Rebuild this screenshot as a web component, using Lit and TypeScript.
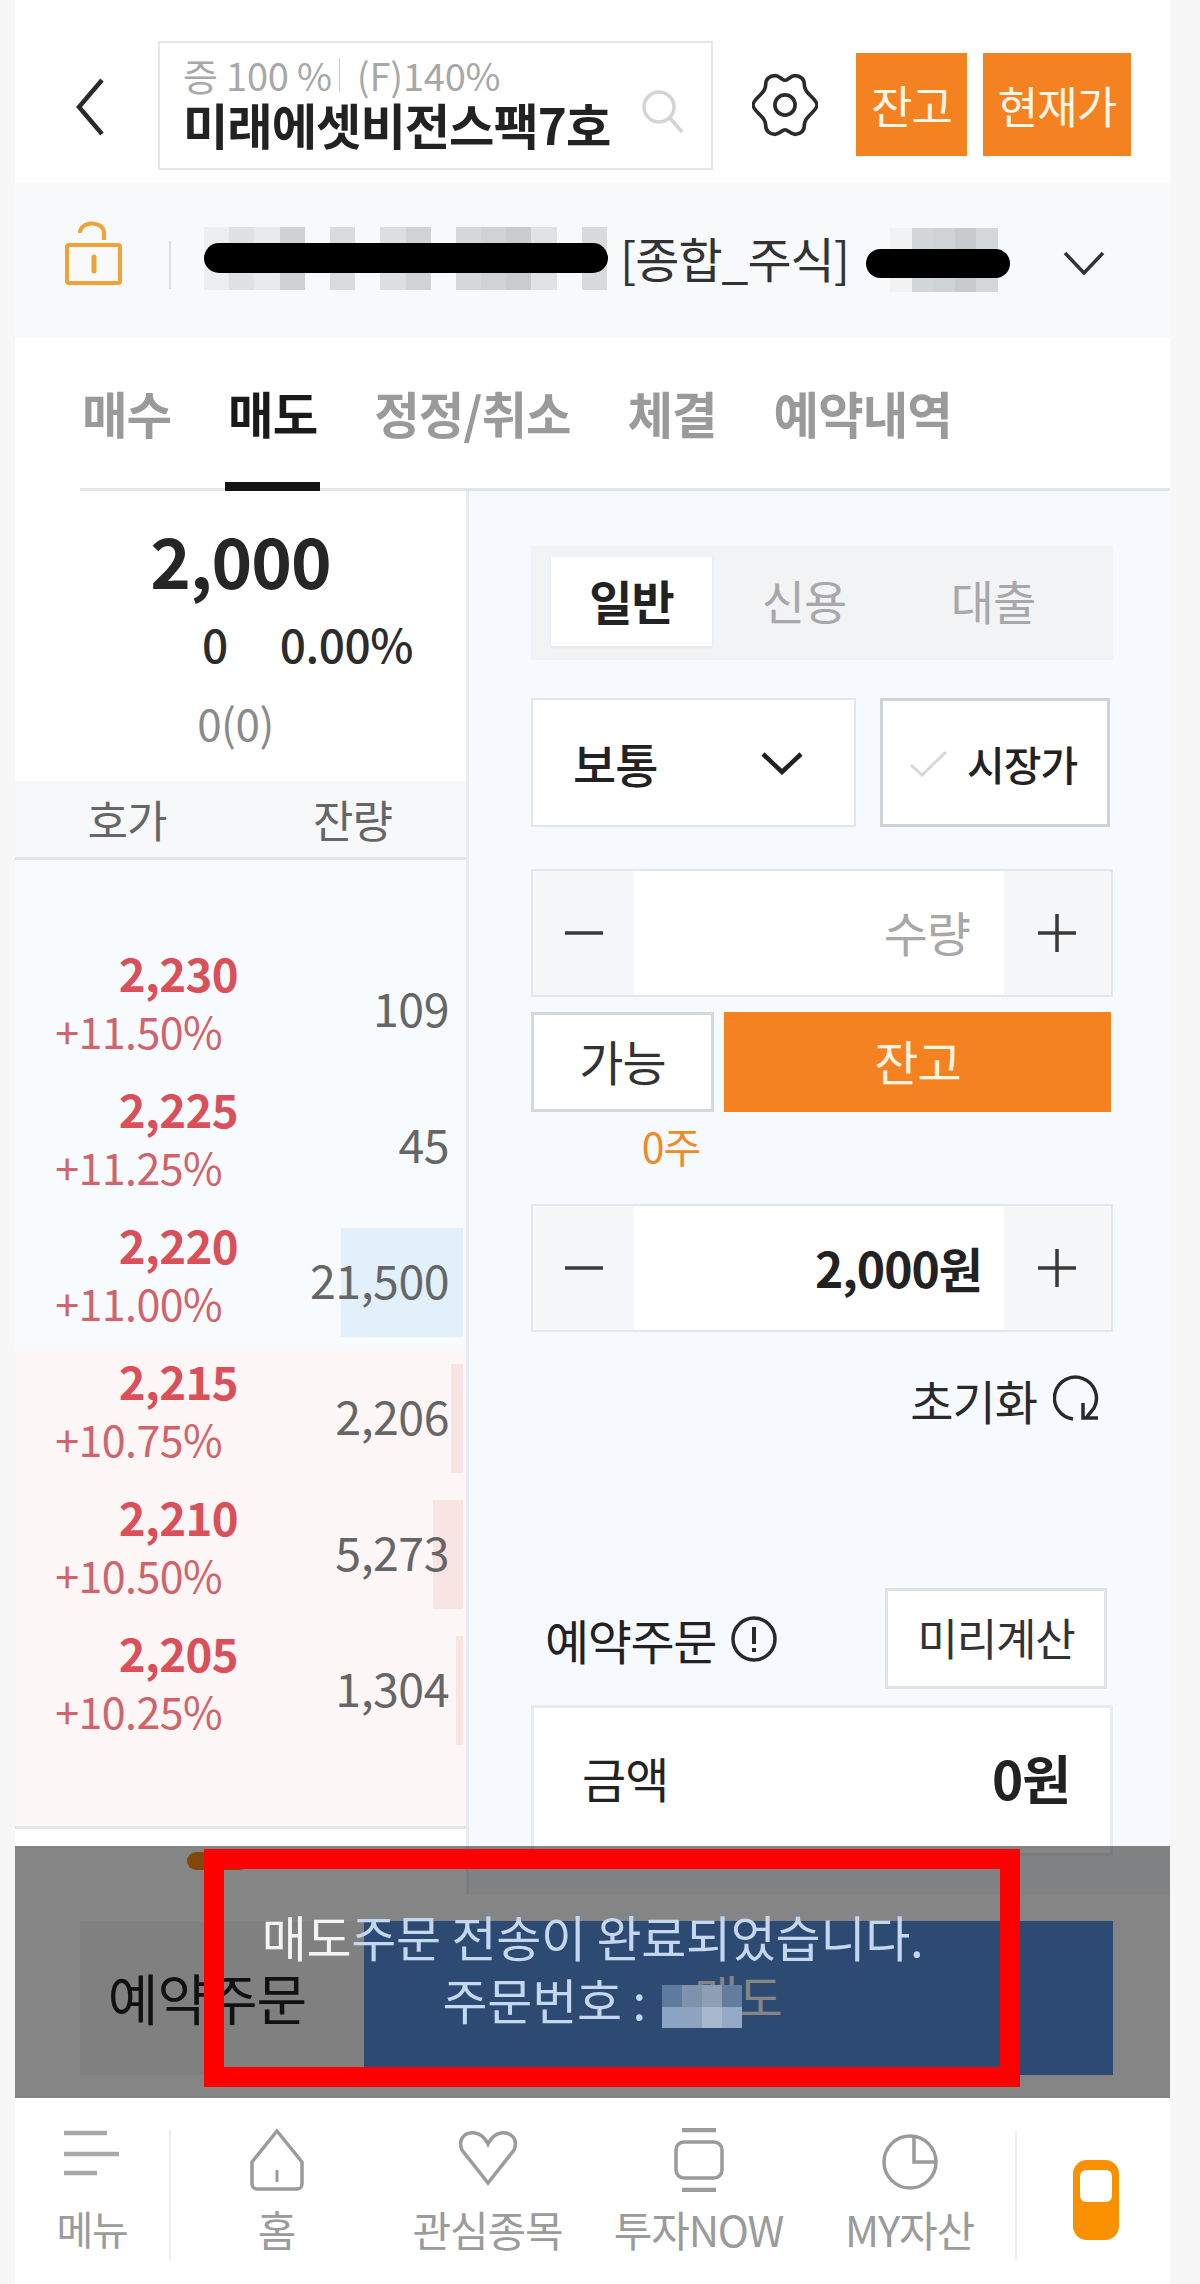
import { LitElement, html, css, svg } from "lit";
import { customElement } from "lit/decorators.js";

const rows = [
  { p: "2,230", c: "+11.50%", q: "109", bar: 0 },
  { p: "2,225", c: "+11.25%", q: "45", bar: 0 },
  { p: "2,220", c: "+11.00%", q: "21,500", bar: 122 },
  { p: "2,215", c: "+10.75%", q: "2,206", bar: 12, red: true },
  { p: "2,210", c: "+10.50%", q: "5,273", bar: 30, red: true },
  { p: "2,205", c: "+10.25%", q: "1,304", bar: 7, red: true },
];
const mosaicA = ["#eceef0","#dfe2e4","#e8eaec","#cfd2d4","#f7f9fb","#d9dcde","#f7f9fb","#dcdfe1","#cfd3d5","#f7f9fb","#d5d8da","#d0d3d5","#c9cccf","#e0e3e5","#f7f9fb","#d8dbdd"];
const mosaicB = ["#f0f2f4","#d3d6d8","#d0d3d5","#c8cbce","#d5d8da"];
const mosaicC = ["#5d7a9f","#7e92ab","#8f9fb3","#657d9d","#8ba3c4","#8ea3bf","#a7b8cd","#94a9c5"];

@customElement("app-root")
export class AppRoot extends LitElement {
  static styles = css`
    :host { display: block; width: 1200px; height: 2284px; overflow: hidden; background: #f7f7f7;
      font-family: "Noto Sans CJK KR", "Noto Sans", sans-serif; color: #222; }
    * { box-sizing: border-box; }
    .phone { width: 1155px; margin-left: 15px; height: 2284px; background: #fff; display: flex; flex-direction: column; }

    .header { height: 183px; padding: 41px 0 0 60px; display: flex; align-items: flex-start; }
    .back { width: 32px; height: 60px; margin: 36px 51px 0 0; }
    .search { width: 555px; height: 129px; border: 2px solid #e4e6e8; padding: 9px 0 0 23px; position: relative; flex: none; }
    .search .l1 { font-size: 38px; line-height: 46px; color: #a8a8a8; letter-spacing: -0.2px; display: flex; align-items: center; white-space: nowrap; }
    .search .sep { width: 1px; height: 34px; background: #ccc; margin: 0 17px 0 7px; }
    .search .l2 { font-size: 49.3px; line-height: 52px; font-weight: 700; letter-spacing: -1px; color: #222; white-space: nowrap; }
    .search svg { position: absolute; left: 479px; top: 45px; width: 46px; height: 46px; }
    .gear { width: 66px; height: 66px; margin: 31px 38px 0 39px; flex: none; }
    .hbtn { height: 103px; margin-top: 12px; background: #f58220; color: #fff6ea; font-size: 45px; display: flex; align-items: center; justify-content: center; letter-spacing: -1px; flex: none; }
    .hbtn.a { width: 111px; margin-right: 16px; }
    .hbtn.b { width: 148px; font-size: 44px; }

    .acct { height: 155px; background: #f7f9fb; display: flex; align-items: flex-start; padding: 40px 0 0 50px; }
    .lock { width: 58px; height: 68px; flex: none; overflow: visible; }
    .vline { width: 2px; height: 48px; background: #dcdfe2; margin: 18px 33px 0 46px; flex: none; }
    .red-a { position: relative; width: 403px; height: 63px; margin-top: 4px; flex: none; display: flex; }
    .mos { flex: 1; }
    .pill { position: absolute; background: #000; border-radius: 16px; }
    .red-a .pill { left: 0; right: -1px; top: 16px; height: 30px; }
    .acct .t { font-size: 48px; line-height: 50px; color: #333; margin: 9px 0 0 13px; width: 246px; letter-spacing: -1px; flex: none; white-space: nowrap; }
    .red-b { position: relative; width: 108px; height: 64px; margin: 5px 0 0 24px; display: flex; flex: none; }
    .red-b .pill { left: -24px; right: -12px; top: 21px; height: 29px; }
    .acct .chev { width: 42px; height: 24px; margin: 28px 0 0 65px; flex: none; }

    .tabs { height: 153px; margin-left: 65px; border-bottom: 3px solid #e2e6ea; display: flex; gap: 57px; padding: 0 0 0 2px; }
    .tab { font-size: 49.5px; font-weight: 700; letter-spacing: -1px; color: #9a9a9a; line-height: 150px; height: 154px; position: relative; white-space: nowrap; }
    .tab.on { color: #1a1a1a; }
    .tab.on::after { content: ""; position: absolute; left: -3px; right: -3px; bottom: 0; height: 10px; background: #141414; }

    .stage { position: relative; flex: none; }
    .main { height: 1404px; display: grid; grid-template-columns: 454px 701px; overflow: hidden; }
    .left { border-right: 3px solid #e8ecf0; display: flex; flex-direction: column; background: #fff; }
    .quote { height: 290px; display: flex; flex-direction: column; align-items: center; }
    .quote .big { font-size: 69px; font-weight: 700; line-height: 100px; margin: 18px 0 0 0; color: #262626; letter-spacing: -1px; }
    .quote .chg { font-size: 46px; line-height: 60px; font-weight: 500; display: flex; gap: 52px; margin: 4px 0 0 134px; color: #2c2c2c; letter-spacing: -0.5px; white-space: nowrap; }
    .quote .vol { font-size: 44px; line-height: 50px; color: #8a8a8a; margin: 24px 0 0 -10px; letter-spacing: -0.5px; }
    .ohd { height: 79px; background: #f7f8fa; border-bottom: 3px solid #e4e7ea; display: grid; grid-template-columns: 224px 227px; font-size: 44px; line-height: 76px; color: #666; text-align: center; letter-spacing: -1px; }
    .book { background: #f7fbfe; padding-top: 81px; }
    .row { height: 136px; position: relative; display: flex; }
    .row.red { background: #fdf6f6; }
    .row .bar { position: absolute; right: 3px; top: 15px; height: 109px; background: #e2f0fb; }
    .row.red .bar { background: #f9e4e4; }
    .row .pc { width: 223px; text-align: right; display: flex; flex-direction: column; align-items: flex-end; position: relative; padding-top: 1px; }
    .row .pr { font-size: 45.5px; line-height: 60px; font-weight: 700; color: #d9505a; letter-spacing: -0.6px; }
    .row .ch { font-size: 43px; line-height: 56px; color: #d2636b; margin-right: 16px; letter-spacing: -0.6px; }
    .row .q { position: relative; flex: 1; text-align: right; font-size: 46.5px; line-height: 131px; color: #666; padding-right: 17px; letter-spacing: -0.5px; white-space: nowrap; }
    .redtail { height: 72px; background: #fdf6f6; border-bottom: 3px solid #e4e4e4; flex: none; }
    .dotwrap { padding: 23px 0 0 172px; }
    .dot { width: 62px; height: 18px; border-radius: 9px; background: #f58a14; }

    .right { background: #f6fafe; padding: 55px 0 0 62px; display: flex; flex-direction: column; width: 701px; }
    .seg { width: 582px; height: 114px; background: #f2f3f5; padding: 11px 0 0 20px; display: flex; font-size: 47px; color: #a8a8a8; letter-spacing: -1px; flex: none; }
    .seg div { text-align: center; line-height: 86px; }
    .seg .on { width: 161px; height: 89px; background: #fff; color: #222; font-weight: 700; box-shadow: 0 1px 3px rgba(0,0,0,.08); }
    .seg .s2 { width: 184px; }
    .seg .s3 { width: 194px; }
    .rowa { display: flex; margin-top: 38px; height: 129px; flex: none; }
    .sel { width: 325px; background: #fff; border: 2px solid #e3e6ea; display: flex; align-items: center; padding: 0 0 0 40px; font-size: 47px; font-weight: 500; letter-spacing: -1px; }
    .sel svg { width: 42px; height: 24px; margin-left: 104px; flex: none; }
    .mkt { width: 230px; margin-left: 24px; background: #fff; border: 3px solid #cfd3d8; display: flex; align-items: center; padding-left: 26px; font-size: 41px; font-weight: 500; letter-spacing: -1px; white-space: nowrap; }
    .mkt svg { width: 40px; height: 28px; margin-right: 18px; flex: none; }
    .stepper { width: 582px; height: 128px; border: 2px solid #e3e6ea; background: #f6f7f9; display: grid; grid-template-columns: 101px 1fr 107px; flex: none; }
    .stepper.q { margin-top: 42px; }
    .stepper.p { margin-top: 35px; }
    .stepper .sb { display: flex; align-items: center; justify-content: center; }
    .stepper svg { width: 40px; height: 40px; }
    .stepper .v { background: #fff; text-align: right; font-size: 48px; line-height: 120px; color: #a8a8a8; padding-right: 34px; letter-spacing: -1px; }
    .stepper.p .v { font-weight: 700; color: #222; font-size: 48px; padding-right: 22px; line-height: 122px; }
    .rowb { display: flex; margin-top: 15px; height: 100px; flex: none; }
    .can { width: 183px; background: #fff; border: 3px solid #d5d8dc; text-align: center; font-size: 48px; line-height: 90px; color: #333; letter-spacing: -1px; }
    .jan { width: 387px; margin-left: 10px; background: #f58220; color: #fff3e2; text-align: center; font-size: 48px; line-height: 96px; letter-spacing: -1px; }
    .zero { width: 280px; text-align: center; font-size: 41px; line-height: 48px; color: #ef8a25; margin: 9px 0 0 0; letter-spacing: -1px; flex: none; }
    .reset { display: flex; justify-content: flex-end; align-items: center; width: 572px; margin-top: 37px; height: 60px; font-size: 47px; letter-spacing: -1px; color: #2a2a2a; flex: none; white-space: nowrap; }
    .reset svg { width: 50px; height: 50px; margin-left: 16px; flex: none; }
    .rsv { display: flex; align-items: center; width: 576px; height: 101px; margin-top: 159px; padding-left: 14px; font-size: 48px; font-weight: 400; letter-spacing: -1.4px; flex: none; white-space: nowrap; }
    .rsv svg { width: 48px; height: 48px; margin-left: 14px; flex: none; }
    .calc { margin-left: auto; width: 222px; height: 101px; background: #fff; border: 3px solid #dfe2e6; text-align: center; font-size: 44px; font-weight: 400; line-height: 92px; letter-spacing: -1.2px; color: #333; }
    .card { width: 582px; height: 151px; margin-top: 16px; background: #fff; border: 3px solid #e8ebef; display: flex; justify-content: space-between; padding: 34px 40px 0 48px; font-size: 48px; letter-spacing: -1px; flex: none; }
    .card b { font-weight: 700; font-size: 53px; line-height: 70px; }

    .actions { height: 203px; padding: 26px 0 0 65px; display: flex; background: #fff; }
    .act1 { width: 284px; height: 154px; background: #f6f6f6; font-size: 55px; line-height: 150px; text-align: center; letter-spacing: -1px; color: #222; padding-right: 30px; white-space: nowrap; }
    .act2 { width: 749px; height: 154px; background: #558edb; color: #fff; font-size: 48px; line-height: 148px; text-align: center; }

    .dim { position: absolute; left: 0; right: 0; top: 1355px; height: 252px; background: rgba(0,0,0,.48); }
    .frame { position: absolute; left: 189px; top: 3px; width: 816px; height: 238px; border: 20px solid #ff0000; }
    .toast { position: absolute; left: 0; right: 0; top: 58px; text-align: center; font-size: 49px; line-height: 63px; color: #c4d7ee; letter-spacing: -0.3px; white-space: nowrap; }
    .toast .w { color: #f4f4f4; }
    .toast .mm { display: inline-grid; grid-template-columns: repeat(4, 20px); grid-template-rows: 21.5px 21.5px; width: 80px; height: 43px; vertical-align: middle; margin-left: 6px; }
    .toast .mm i { display: block; }

    .nav { flex: 1; display: grid; grid-template-columns: 156px repeat(4, 211px) 155px; background: #fff; position: relative; }
    .ni { display: flex; flex-direction: column; align-items: center; padding-top: 30px; font-size: 42px; color: #9b9b9b; letter-spacing: -1.2px; }
    .ni svg { width: 70px; height: 64px; flex: none; }
    .ni span { line-height: 50px; margin-top: 12px; white-space: nowrap; }
    .ni.m { border-right: 2px solid #eee; margin: 32px 0 24px; padding-top: 0; font-size: 40px; }
    .ni.m svg { margin: -3px 0 0 0; }
    .ni.last { border-left: 2px solid #eee; margin: 32px 0 24px 0; padding-top: 0; align-items: flex-start; }
    .phonebtn { width: 46px; height: 80px; margin: 30px 0 0 56px; border-radius: 14px; background: #f89000; padding: 10px 7px 0; flex: none; }
    .phonebtn i { display: block; height: 32px; background: #fff; border-radius: 6px; }
  `;

  private plus() {
    return html`<svg viewBox="0 0 40 40"><path d="M0 20H38M19 1V39" stroke="#3a3a3a" stroke-width="3.5" fill="none"/></svg>`;
  }
  private minus() {
    return html`<svg viewBox="0 0 40 40"><path d="M1 20H39" stroke="#3a3a3a" stroke-width="3.5" fill="none"/></svg>`;
  }

  render() {
    return html`<div class="phone">
      <div class="header">
        <svg class="back" viewBox="0 0 32 60"><path d="M27 3 4 30 27 57" fill="none" stroke="#2a2a2a" stroke-width="4.5"/></svg>
        <div class="search">
          <div class="l1">증 100 %<span class="sep"></span>(F)140%</div>
          <div class="l2">미래에셋비전스팩7호</div>
          <svg viewBox="0 0 46 46"><circle cx="20" cy="19" r="15" fill="none" stroke="#d4d4d4" stroke-width="3.5"/><path d="M31 30 43 44" stroke="#d4d4d4" stroke-width="3.5"/></svg>
        </div>
        <svg class="gear" viewBox="0 0 72 72"><path d="M36 9C39 9 42 4 47 4C53 4 57 8 57 13C57 19 60 22 65 27C69 31 71 33 71 36C71 39 69 41 65 45C60 50 57 53 57 59C57 64 53 68 47 68C42 68 39 63 36 63C33 63 30 68 25 68C19 68 15 64 15 59C15 53 12 50 7 45C3 41 1 39 1 36C1 33 3 31 7 27C12 22 15 19 15 13C15 8 19 4 25 4C30 4 33 9 36 9Z" fill="none" stroke="#2b2b2b" stroke-width="4"/><circle cx="36" cy="36" r="11" fill="none" stroke="#2b2b2b" stroke-width="4"/></svg>
        <div class="hbtn a">잔고</div>
        <div class="hbtn b">현재가</div>
      </div>

      <div class="acct">
        <svg class="lock" viewBox="0 0 58 68"><path d="M15 10A12 9 0 0 1 39 9V17" fill="none" stroke="#f2a136" stroke-width="4"/><rect x="2" y="22" width="53" height="38" rx="2" fill="none" stroke="#f2a136" stroke-width="4"/><path d="M29 34V48" stroke="#f2a136" stroke-width="5" stroke-linecap="round"/></svg>
        <div class="vline"></div>
        <div class="red-a">
          ${mosaicA.map((c) => html`<div class="mos" style="background:${c}"></div>`)}
          <div class="pill"></div>
        </div>
        <div class="t">[종합_주식]</div>
        <div class="red-b">
          ${mosaicB.map((c) => html`<div class="mos" style="background:${c}"></div>`)}
          <div class="pill"></div>
        </div>
        <svg class="chev" viewBox="0 0 42 24"><path d="M2 2 21 22 40 2" fill="none" stroke="#333" stroke-width="3.5"/></svg>
      </div>

      <div class="tabs">
        <div class="tab">매수</div><div class="tab on">매도</div><div class="tab">정정/취소</div><div class="tab">체결</div><div class="tab">예약내역</div>
      </div>

      <div class="stage">
        <div class="main">
          <div class="left">
            <div class="quote">
              <div class="big">2,000</div>
              <div class="chg"><span>0</span><span>0.00%</span></div>
              <div class="vol">0(0)</div>
            </div>
            <div class="ohd"><div>호가</div><div>잔량</div></div>
            <div class="book">
              ${rows.map((r) => html`<div class="row ${r.red ? "red" : ""}">
                ${r.bar ? html`<div class="bar" style="width:${r.bar}px"></div>` : ""}
                <div class="pc"><div class="pr">${r.p}</div><div class="ch">${r.c}</div></div>
                <div class="q">${r.q}</div>
              </div>`)}
            </div>
            <div class="redtail"></div>
            <div class="dotwrap"><div class="dot"></div></div>
          </div>
          <div class="right">
            <div class="seg"><div class="on">일반</div><div class="s2">신용</div><div class="s3">대출</div></div>
            <div class="rowa">
              <div class="sel">보통 <svg viewBox="0 0 42 24"><path d="M2 3 21 21 40 3" fill="none" stroke="#222" stroke-width="4.5"/></svg></div>
              <div class="mkt"><svg viewBox="0 0 40 28"><path d="M2 16 13 26 37 3" fill="none" stroke="#d8d8d8" stroke-width="3"/></svg>시장가</div>
            </div>
            <div class="stepper q">
              <div class="sb">${this.minus()}</div><div class="v">수량</div><div class="sb">${this.plus()}</div>
            </div>
            <div class="rowb"><div class="can">가능</div><div class="jan">잔고</div></div>
            <div class="zero">0주</div>
            <div class="stepper p">
              <div class="sb">${this.minus()}</div><div class="v">2,000원</div><div class="sb">${this.plus()}</div>
            </div>
            <div class="reset">초기화
              <svg viewBox="0 0 50 50"><path d="M20 45A21 21 0 1 1 41 34L33 44" fill="none" stroke="#2a2a2a" stroke-width="3.5"/><path d="M30 29V44H45" fill="none" stroke="#2a2a2a" stroke-width="3.5"/></svg>
            </div>
            <div class="rsv">예약주문
              <svg viewBox="0 0 48 48"><circle cx="24" cy="24" r="21" fill="none" stroke="#2a2a2a" stroke-width="3.5"/><path d="M24 12V29M24 33V37" stroke="#2a2a2a" stroke-width="4"/></svg>
              <div class="calc">미리계산</div>
            </div>
            <div class="card"><span>금액</span><b>0원</b></div>
          </div>
        </div>
        <div class="actions">
          <div class="act1">예약주문</div>
          <div class="act2">매도</div>
        </div>
        <div class="dim">
          <div class="toast">
            <div><span class="w">매도</span>주문 전송이 완료되었습니다.</div>
            <div>주문번호 : <span class="mm">${mosaicC.map((c) => html`<i style="background:${c}"></i>`)}</span></div>
          </div>
          <div class="frame"></div>
        </div>
      </div>

      <div class="nav">
        <div class="ni m">
          <svg viewBox="0 0 70 64">${svg`<path d="M7 6H50M7 27H62M7 46H40" stroke="#a8a8a8" stroke-width="4.5" fill="none"/>`}</svg>
          <span>메뉴</span>
        </div>
        <div class="ni">
          <svg viewBox="0 0 70 64"><path d="M35 3 60 34V56a5 5 0 0 1-5 5H15a5 5 0 0 1-5-5V34z" fill="none" stroke="#9b9b9b" stroke-width="3.5"/><path d="M35 42V54" stroke="#9b9b9b" stroke-width="3"/></svg>
          <span>홈</span>
        </div>
        <div class="ni">
          <svg viewBox="0 0 70 64"><path d="M35 55 9 22C4 10 13 4 22 5c6 1 10 5 13 11 3-6 7-10 13-11 9-1 18 5 13 17z" fill="none" stroke="#9b9b9b" stroke-width="3.5"/></svg>
          <span>관심종목</span>
        </div>
        <div class="ni">
          <svg viewBox="0 0 70 64"><path d="M18 2H52M18 62H52" stroke="#9b9b9b" stroke-width="4.5"/><rect x="12" y="14" width="46" height="36" rx="8" fill="none" stroke="#9b9b9b" stroke-width="3.5"/></svg>
          <span>투자NOW</span>
        </div>
        <div class="ni">
          <svg viewBox="0 0 70 64"><circle cx="35" cy="34" r="26" fill="none" stroke="#9b9b9b" stroke-width="3.5"/><path d="M39 8V34H61" fill="none" stroke="#9b9b9b" stroke-width="3.5"/></svg>
          <span>MY자산</span>
        </div>
        <div class="ni last"><div class="phonebtn"><i></i></div></div>
      </div>
    </div>`;
  }
}
